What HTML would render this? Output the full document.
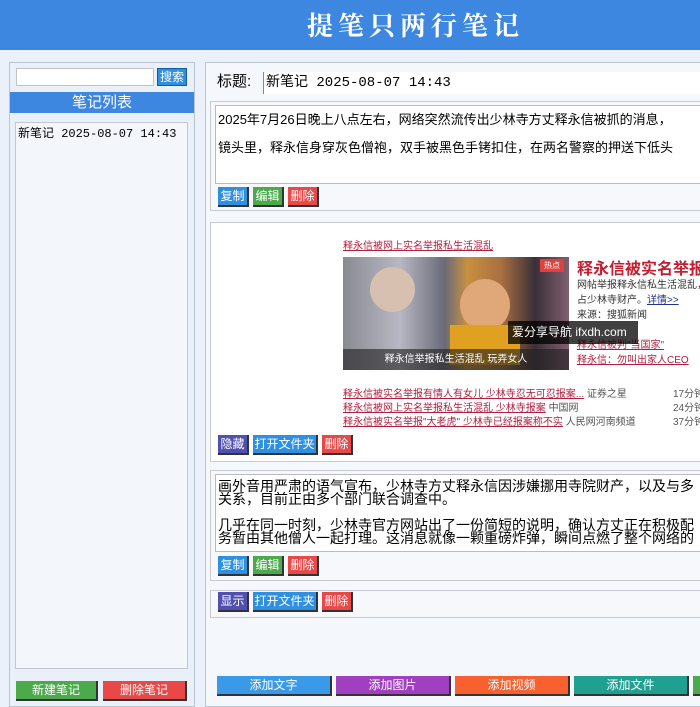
<!DOCTYPE html>
<html><head><meta charset="utf-8"><style>
*{box-sizing:border-box;margin:0;padding:0}
body{width:700px;height:707px;overflow:hidden;background:#eaf1fa;font-family:"Liberation Sans","Noto Sans CJK SC",sans-serif;position:relative;font-size:13px;color:#000}
.a{position:absolute}
.hdr{left:0;top:0;width:700px;height:50px;background:#3d87e0}
.hdr span{position:absolute;left:307px;top:6px;font-size:26px;color:#fff;font-family:"Noto Serif CJK SC","Liberation Serif",serif;font-weight:bold;letter-spacing:5px;white-space:nowrap}
.btn{position:absolute;color:#fff;font-size:12px;text-align:center;line-height:19px;height:20px;border-right:2px solid #333;border-bottom:2px solid #333}
.b{background:#2f8fe0}.g{background:#4caa4c}.r{background:#e84848}.p{background:#5050b0}
.card{position:absolute;left:210px;width:500px;background:#f6f8fb;border:1px solid #c8ccd2}
.ta{position:absolute;left:4px;width:500px;background:#fff;border:1px solid #b8bcc2;font-size:13px;line-height:28px;padding:0 0 0 2px;white-space:nowrap;overflow:hidden}
</style></head><body>
<div class="a hdr"><span>提笔只两行笔记</span></div>
<div class="a" style="left:9px;top:62px;width:186px;height:645px;border:1px solid #bcc4ce;background:#e9f0f9"></div>
<div class="a" style="left:16px;top:68px;width:138px;height:18px;background:#fff;border:1px solid #c0c4c8"></div>
<div class="btn b" style="left:157px;top:68px;width:30px;height:18px;line-height:17px;border:1px solid #155a9a">搜索</div>
<div class="a" style="left:10px;top:92px;width:184px;height:21px;background:#3d87e0;color:#fff;text-align:center;font-size:15px;line-height:21px">笔记列表</div>
<div class="a" style="left:15px;top:122px;width:173px;height:547px;background:#f3f7fc;border:1px solid #c4c8cc;font-family:'Liberation Mono','Noto Sans CJK SC',monospace;font-size:12px;padding:1px 2px">新笔记 2025-08-07 14:43</div>
<div class="btn g" style="left:16px;top:681px;width:82px;height:20px">新建笔记</div>
<div class="btn r" style="left:103px;top:681px;width:84px;height:20px">删除笔记</div>

<div class="a" style="left:205px;top:62px;width:500px;height:645px;border:1px solid #bcc4ce;background:#f4f7fb"></div>
<div class="a" style="left:217px;top:73px;font-size:15px;line-height:18px">标题:</div>
<div class="a" style="left:263px;top:72px;width:440px;height:22px;background:#fff;border-left:1px solid #888;font-family:'Liberation Mono','Noto Sans CJK SC',monospace;font-size:14px;line-height:22px;padding-left:2px">新笔记 2025-08-07 14:43</div>

<div class="card" style="top:101px;height:110px">
<div class="ta" style="top:3px;height:79px">2025年7月26日晚上八点左右，网络突然流传出少林寺方丈释永信被抓的消息，<br>镜头里，释永信身穿灰色僧袍，双手被黑色手铐扣住，在两名警察的押送下低头</div>
</div>
<div class="btn b" style="left:218px;top:187px;width:31px">复制</div>
<div class="btn g" style="left:253px;top:187px;width:31px">编辑</div>
<div class="btn r" style="left:288px;top:187px;width:31px">删除</div>

<div class="card" style="top:222px;height:240px;background:#fff"></div>
<div class="a" style="left:340px;top:235px;width:360px;height:195px;background:#fff;font-size:10px;overflow:hidden">
 <div class="a" style="left:3px;top:2px;color:#b02040;text-decoration:underline">释永信被网上实名举报私生活混乱</div>
 <div class="a" style="left:3px;top:22px;width:226px;height:113px;background:linear-gradient(90deg,#8a8a92 0%,#b8b8c4 25%,#6a6a78 45%,#c89040 55%,#a87040 70%,#3a3038 85%,#806070 100%)"></div>
 <div class="a" style="left:30px;top:32px;width:45px;height:45px;border-radius:50%;background:#d8c0b0"></div>
 <div class="a" style="left:120px;top:44px;width:50px;height:52px;border-radius:50%;background:#e0a878"></div>
 <div class="a" style="left:110px;top:90px;width:70px;height:40px;background:#e0a020"></div>
 <div class="a" style="left:200px;top:24px;width:24px;height:13px;background:#e04040;color:#fff;font-size:8px;text-align:center;line-height:13px">热点</div>
 <div class="a" style="left:3px;top:114px;width:226px;height:21px;background:rgba(30,30,30,.6);color:#fff;text-align:center;line-height:21px">释永信举报私生活混乱 玩弄女人</div>
 <div class="a" style="left:237px;top:20px;color:#c02030;font-size:16px;font-weight:bold;white-space:nowrap">释永信被实名举报</div>
 <div class="a" style="left:237px;top:43px;color:#333;white-space:nowrap;line-height:15px">网帖举报释永信私生活混乱，侵<br>占少林寺财产。<u style="color:#223388">详情>></u><br>来源：搜狐新闻<br><br><u style="color:#b02040">释永信被判"当国家"</u><br><u style="color:#b02040">释永信：勿叫出家人CEO</u></div>
 <div class="a" style="left:168px;top:86px;width:130px;height:23px;background:rgba(0,0,0,.75);color:#fff;font-size:12px;line-height:23px;padding-left:4px;white-space:nowrap">爱分享导航 ifxdh.com</div>
 <div class="a" style="left:3px;top:153px;line-height:14px;white-space:nowrap;color:#b02040"><u>释永信被实名举报有情人有女儿 少林寺忍无可忍报案...</u> <span style="color:#555">证券之星</span><br><u>释永信被网上实名举报私生活混乱 少林寺报案</u> <span style="color:#555">中国网</span><br><u>释永信被实名举报"大老虎" 少林寺已经报案称不实</u> <span style="color:#555">人民网河南频道</span></div>
 <div class="a" style="left:333px;top:153px;line-height:14px;color:#555;white-space:nowrap">17分钟<br>24分钟<br>37分钟</div>
</div>
<div class="btn p" style="left:218px;top:435px;width:31px">隐藏</div>
<div class="btn b" style="left:253px;top:435px;width:65px">打开文件夹</div>
<div class="btn r" style="left:322px;top:435px;width:31px">删除</div>

<div class="card" style="top:470px;height:111px">
<div class="ta" style="top:3px;height:78px;line-height:13px;font-size:14px;padding-top:5px">画外音用严肃的语气宣布，少林寺方丈释永信因涉嫌挪用寺院财产，以及与多<br>关系，目前正由多个部门联合调查中。<br><br>几乎在同一时刻，少林寺官方网站出了一份简短的说明，确认方丈正在积极配<br>务暂由其他僧人一起打理。这消息就像一颗重磅炸弹，瞬间点燃了整个网络的</div>
</div>
<div class="btn b" style="left:218px;top:556px;width:31px">复制</div>
<div class="btn g" style="left:253px;top:556px;width:31px">编辑</div>
<div class="btn r" style="left:288px;top:556px;width:31px">删除</div>

<div class="card" style="top:590px;height:28px"></div>
<div class="btn p" style="left:218px;top:592px;width:31px">显示</div>
<div class="btn b" style="left:253px;top:592px;width:65px">打开文件夹</div>
<div class="btn r" style="left:322px;top:592px;width:31px">删除</div>

<div class="btn" style="left:217px;top:676px;width:115px;background:#3a9ae8">添加文字</div>
<div class="btn" style="left:336px;top:676px;width:115px;background:#a040c0">添加图片</div>
<div class="btn" style="left:455px;top:676px;width:115px;background:#f86030">添加视频</div>
<div class="btn" style="left:574px;top:676px;width:115px;background:#20a090">添加文件</div>
<div class="btn" style="left:693px;top:676px;width:20px;background:#4caa4c"></div>
</body></html>
